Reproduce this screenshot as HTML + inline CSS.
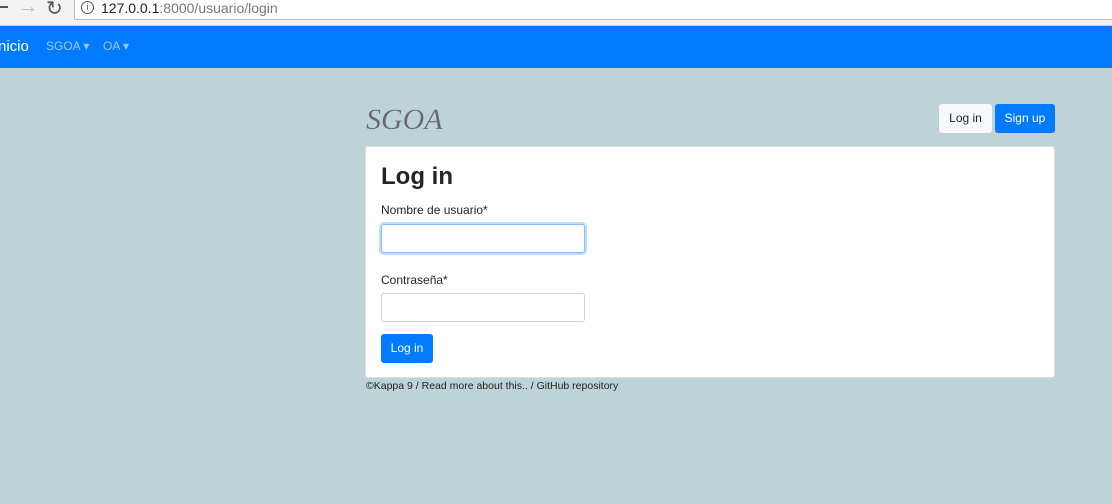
<!DOCTYPE html>
<html><head><meta charset="utf-8"><style>
*{box-sizing:border-box;margin:0;padding:0}
body{width:1112px;height:504px;overflow:hidden;background:#bed3d7;font-family:"Liberation Sans",sans-serif;position:relative}
.chrome{position:absolute;left:0;top:0;width:1112px;height:26px;background:#f2f2f2;border-bottom:1px solid #ccc}
.url{position:absolute;left:74px;top:-2px;width:1050px;height:22px;background:#fff;border:1px solid #bbb;border-radius:2px;font-size:14px;line-height:19px;padding-left:26px;color:#777}
.url b{font-weight:normal;color:#222}
.nav{position:absolute;left:0;top:26px;width:1112px;height:42px;background:#007bff}
.nav span{position:absolute;top:13px;font-size:12px;color:rgba(255,255,255,.6)}
.card{position:absolute;left:365px;top:146px;width:690px;height:232px;background:#fff;border:1px solid #dfdfdf;border-radius:3px}
.lbl{position:absolute;font-size:12px;color:#212529}
.inp{position:absolute;left:15px;width:204px;height:29px;border:1px solid #ced4da;border-radius:3px;background:#fff}
.btn{position:absolute;font-size:12px;border-radius:3px;text-align:center;line-height:29px;height:29px}
</style></head><body>
<div class="chrome">
<div style="position:absolute;left:0;top:6px;width:8px;height:2px;background:#555"></div>
<div style="position:absolute;left:18px;top:-4px;font-size:20px;color:#bbb">→</div>
<div style="position:absolute;left:46px;top:-4px;font-size:20px;color:#555">↻</div>
<div class="url"><span style="position:absolute;left:6px;top:2px;width:13px;height:13px;border:1.5px solid #555;border-radius:50%;font-size:9px;line-height:10px;text-align:center;color:#555">i</span><b>127.0.0.1</b>:8000/usuario/login</div>
</div>
<div class="nav">
<span style="left:-2px;top:12px;font-size:15px;color:#fff">nicio</span>
<span style="left:46px">SGOA ▾</span>
<span style="left:103px">OA ▾</span>
</div>
<div style="position:absolute;left:366px;top:103px;font-family:'Liberation Serif',serif;font-style:italic;font-size:30px;color:#667;letter-spacing:0px;-webkit-text-stroke:0.2px #bed3d7">SGOA</div>
<div class="btn" style="left:939px;top:104px;width:53px;background:#f8f9fa;color:#212529">Log in</div>
<div class="btn" style="left:995px;top:104px;width:60px;background:#007bff;color:#fff">Sign up</div>
<div class="card">
<div style="position:absolute;left:15px;top:16px;font-size:24px;font-weight:bold;color:#212529">Log in</div>
<div class="lbl" style="left:15px;top:56px">Nombre de usuario*</div>
<div class="inp" style="top:77px;border-color:#80bdff;box-shadow:0 0 0 2px rgba(0,123,255,.25)"></div>
<div class="lbl" style="left:15px;top:126px">Contraseña*</div>
<div class="inp" style="top:146px"></div>
<div class="btn" style="left:15px;top:187px;width:52px;background:#007bff;color:#fff">Log in</div>
</div>
<div style="position:absolute;left:366px;top:380px;font-size:10.5px;color:#222">©Kappa 9 / Read more about this.. / GitHub repository</div>
</body></html>
